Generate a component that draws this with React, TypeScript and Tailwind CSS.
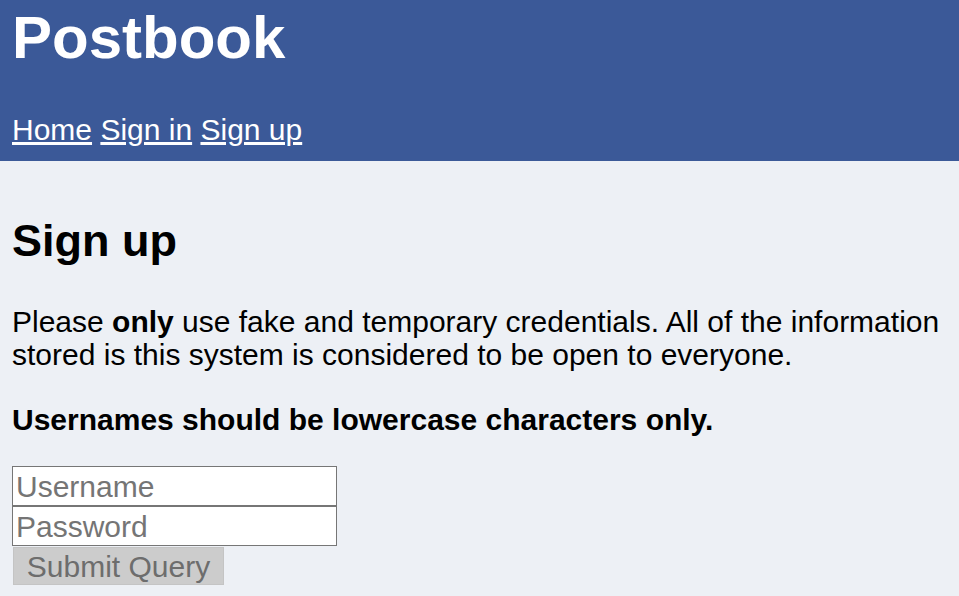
import React from 'react';

const App: React.FC = () => {
  return (
    <div className="min-h-[596px] bg-[#edf0f5] font-['Liberation_Sans',Arial,sans-serif] text-black">
      <header className="bg-[#3b5998] px-[12px] pt-[3px] pb-[15px] text-white">
        <h1 className="text-[60px] font-bold leading-[69px]">Postbook</h1>
        <nav className="mt-[41px] text-[30px] leading-[33px]">
          <a href="#" className="underline">Home</a>{' '}
          <a href="#" className="underline">Sign in</a>{' '}
          <a href="#" className="underline">Sign up</a>
        </nav>
      </header>

      <main className="px-[12px] pt-[54px] text-[30px] leading-[33px]">
        <h2 className="text-[45px] font-bold leading-[52px]">Sign up</h2>
        <p className="mt-[38px]">
          Please <span className="font-bold">only</span> use fake and temporary credentials. All of
          the information stored is this system is considered to be open to everyone.
        </p>
        <p className="mt-[32px] font-bold">Usernames should be lowercase characters only.</p>

        <form className="mt-[30px] flex flex-col items-start" onSubmit={(e) => e.preventDefault()}>
          <input
            type="text"
            placeholder="Username"
            className="block h-[40px] w-[325px] border border-[#767676] bg-white px-[3px] pt-[2px] text-[30px] leading-[34px] outline-none placeholder:text-[#757575]"
          />
          <input
            type="password"
            placeholder="Password"
            className="block h-[40px] w-[325px] border border-[#767676] bg-white px-[3px] pt-[2px] text-[30px] leading-[34px] outline-none placeholder:text-[#757575]"
          />
          <button
            type="submit"
            disabled
            className="mt-[1px] ml-[1px] h-[38px] w-[211px] border border-[#c4c4c4] bg-[#cccccc] pt-[1px] text-[30px] leading-[34px] text-[#6d6d6d]"
          >
            Submit Query
          </button>
        </form>
      </main>
    </div>
  );
};

export default App;
